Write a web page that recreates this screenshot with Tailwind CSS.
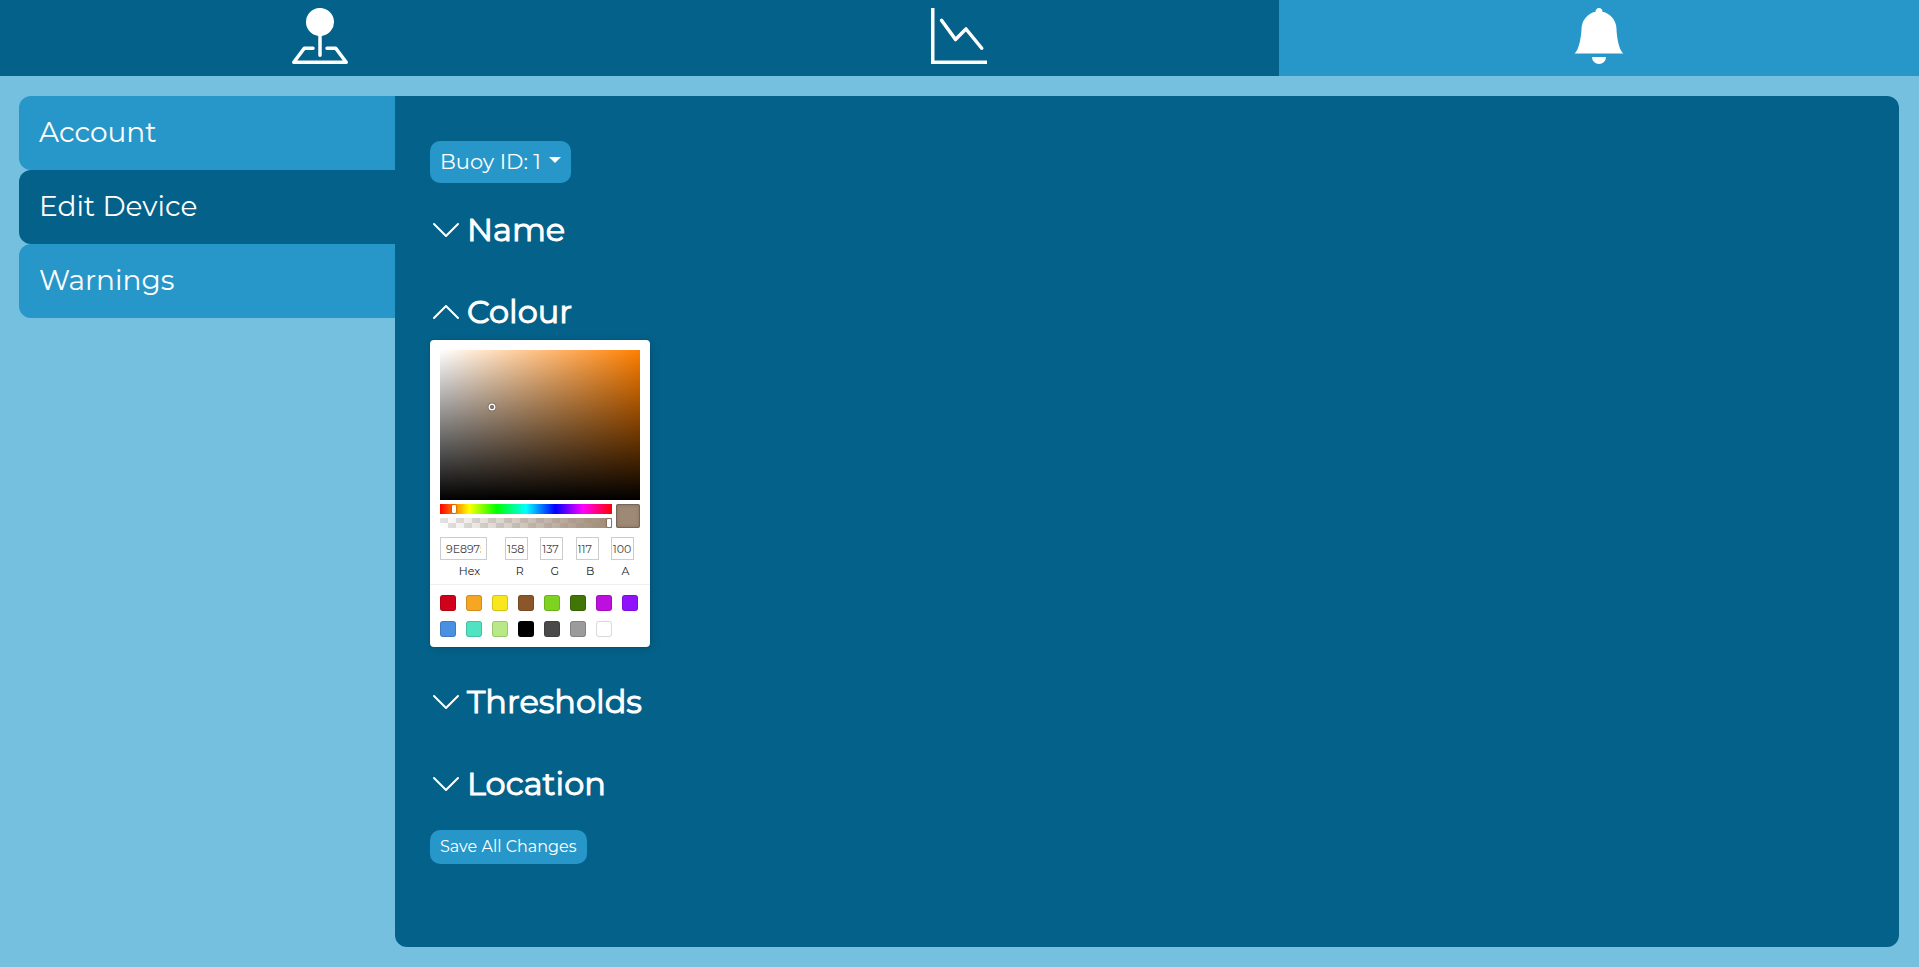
<!DOCTYPE html>
<html lang="en">
<head>
<meta charset="utf-8">
<meta name="viewport" content="width=device-width, initial-scale=1">
<title>Edit Device</title>
<script src="https://cdn.jsdelivr.net/npm/@tailwindcss/browser@4"></script>
</head>
<body class="flex min-h-screen flex-col bg-[#75bfdf] font-[Montserrat,Inter,sans-serif] text-white">
  <nav class="grid grid-cols-3 bg-[#046189]">
    <a href="#map" aria-label="Map" class="flex justify-center pt-2 pb-3">
      <svg class="size-14" viewBox="0 0 16 16" fill="currentColor"><path fill-rule="evenodd" d="M3.1 11.2a.5.5 0 0 1 .4-.2H6a.5.5 0 0 1 0 1H3.75L1.5 15h13l-2.25-3H10a.5.5 0 0 1 0-1h2.5a.5.5 0 0 1 .4.2l3 4a.5.5 0 0 1-.4.8H.5a.5.5 0 0 1-.4-.8l3-4z"/><path fill-rule="evenodd" d="M4 4a4 4 0 1 1 4.5 3.969V13.5a.5.5 0 0 1-1 0V7.97A4 4 0 0 1 4 3.999z"/></svg>
    </a>
    <a href="#graphs" aria-label="Graphs" class="flex justify-center pt-2 pb-3">
      <svg class="size-14" viewBox="0 0 16 16" fill="currentColor"><path fill-rule="evenodd" d="M0 0h1v15h15v1H0V0zm14.817 11.887a.5.5 0 0 0 .07-.704l-4.5-5.5a.5.5 0 0 0-.74-.037L7.06 8.233 3.404 3.206a.5.5 0 0 0-.808.588l4 5.5a.5.5 0 0 0 .758.06l2.609-2.61 4.15 5.073a.5.5 0 0 0 .704.07z"/></svg>
    </a>
    <a href="#warnings" aria-label="Notifications" class="flex justify-center bg-[#2797c9] pt-2 pb-3">
      <svg class="size-14" viewBox="0 0 16 16" fill="currentColor"><path d="M8 16a2 2 0 0 0 2-2H6a2 2 0 0 0 2 2zm.995-14.901a1 1 0 1 0-1.99 0A5.002 5.002 0 0 0 3 6c0 1.098-.5 6-2 7h14c-1.5-1-2-5.902-2-7 0-2.42-1.72-4.44-4.005-4.901z"/></svg>
    </a>
  </nav>

  <div class="flex grow py-5 pr-5 pl-[19px]">
    <aside class="flex w-1/5 shrink-0 flex-col text-[28px] leading-[42px]">
      <a href="#account" class="rounded-l-xl bg-[#2797c9] px-5 pt-[15px] pb-[17px]">Account</a>
      <a href="#edit" aria-current="page" class="rounded-l-xl bg-[#046189] px-5 pt-[15px] pb-[17px]">Edit Device</a>
      <a href="#warnings-list" class="rounded-l-xl bg-[#2797c9] px-5 pt-[15px] pb-[17px]">Warnings</a>
    </aside>

    <main class="flex grow flex-col items-start rounded-r-xl rounded-bl-xl bg-[#046189] px-[35px] pt-[45px] pb-10">
      <div class="relative">
        <select aria-label="Buoy" class="h-[42px] appearance-none rounded-[10px] bg-[#2797c9] pr-[30px] pl-[10px] text-[21px] field-sizing-content">
          <option>Buoy ID: 1</option>
        </select>
        <svg class="pointer-events-none absolute top-4 right-[10px] h-[6px] w-3" viewBox="0 0 12 6" fill="currentColor"><path d="M0 0h12L6 6z"/></svg>
      </div>

      <h2 class="mt-[27px] text-[32px] leading-10 [-webkit-text-stroke:1px_currentColor]">
        <button class="flex items-center gap-[5px]" aria-expanded="false">
          <svg class="size-8" viewBox="0 0 16 16" fill="currentColor"><path fill-rule="evenodd" d="M1.646 4.646a.5.5 0 0 1 .708 0L8 10.293l5.646-5.647a.5.5 0 0 1 .708.708l-6 6a.5.5 0 0 1-.708 0l-6-6a.5.5 0 0 1 0-.708z"/></svg>
          Name
        </button>
      </h2>

      <h2 class="mt-[42px] text-[32px] leading-10 [-webkit-text-stroke:1px_currentColor]">
        <button class="flex items-center gap-[5px]" aria-expanded="true">
          <svg class="size-8" viewBox="0 0 16 16" fill="currentColor"><path fill-rule="evenodd" d="M7.646 4.646a.5.5 0 0 1 .708 0l6 6a.5.5 0 0 1-.708.708L8 5.707l-5.646 5.647a.5.5 0 0 1-.708-.708l6-6z"/></svg>
          Colour
        </button>
      </h2>

      <section aria-label="Colour picker" class="mt-2 w-[220px] rounded bg-white px-[10px] pt-[10px] text-[#222] shadow-[0_0_0_1px_rgba(0,0,0,0.05),2px_2px_8px_rgba(0,0,0,0.12)]">
        <div class="relative h-[150px] bg-[linear-gradient(to_top,#000,transparent),linear-gradient(to_right,#fff,transparent),linear-gradient(#ff7f00,#ff7f00)]">
          <span class="absolute top-[38%] left-[26%] size-1 -translate-x-1/2 -translate-y-1/2 rounded-full shadow-[0_0_0_1.5px_#fff,inset_0_0_1px_1px_rgba(0,0,0,0.3),0_0_1px_2px_rgba(0,0,0,0.4)]"></span>
        </div>
        <div class="mt-1 flex gap-1">
          <div class="flex grow flex-col gap-1">
            <input type="range" aria-label="Hue" min="0" max="360" value="26" class="block h-[10px] w-full appearance-none bg-[linear-gradient(to_right,#f00_0%,#ff0_17%,#0f0_33%,#0ff_50%,#00f_67%,#f0f_83%,#f00_100%)] [&::-webkit-slider-thumb]:h-2 [&::-webkit-slider-thumb]:w-1 [&::-webkit-slider-thumb]:appearance-none [&::-webkit-slider-thumb]:rounded-[1px] [&::-webkit-slider-thumb]:bg-white [&::-webkit-slider-thumb]:shadow-[0_0_2px_rgba(0,0,0,0.6)]">
            <input type="range" aria-label="Alpha" min="0" max="168" value="167" class="block h-[10px] w-full appearance-none bg-[linear-gradient(to_right,rgba(158,137,117,0),#9e8975),repeating-conic-gradient(#fff_0_25%,#e2e2e2_0_50%)] bg-[size:auto,16px_16px] bg-left [&::-webkit-slider-thumb]:h-2 [&::-webkit-slider-thumb]:w-1 [&::-webkit-slider-thumb]:appearance-none [&::-webkit-slider-thumb]:rounded-[1px] [&::-webkit-slider-thumb]:bg-white [&::-webkit-slider-thumb]:shadow-[0_0_2px_rgba(0,0,0,0.6)]">
          </div>
          <span class="size-6 rounded-xs bg-[#9e8975] shadow-[inset_0_0_0_1px_rgba(0,0,0,0.15),inset_0_0_4px_rgba(0,0,0,0.25)]"></span>
        </div>
        <div class="mt-[9px] grid grid-cols-[59px_repeat(4,1fr)] gap-[6px] text-[11px] leading-4">
          <label class="flex flex-col text-center"><input value="9E8975" class="mb-[3px] h-[23px] w-[47px] px-[6px] text-[#444] shadow-[inset_0_0_0_1px_#ccc]">Hex</label>
          <label class="flex flex-col text-center"><input value="158" class="mb-[3px] h-[23px] w-[23px] px-[2px] text-[#444] shadow-[inset_0_0_0_1px_#ccc]">R</label>
          <label class="flex flex-col text-center"><input value="137" class="mb-[3px] h-[23px] w-[23px] px-[2px] text-[#444] shadow-[inset_0_0_0_1px_#ccc]">G</label>
          <label class="flex flex-col text-center"><input value="117" class="mb-[3px] h-[23px] w-[23px] px-[2px] text-[#444] shadow-[inset_0_0_0_1px_#ccc]">B</label>
          <label class="flex flex-col text-center"><input value="100" class="mb-[3px] h-[23px] w-[23px] px-[2px] text-[#444] shadow-[inset_0_0_0_1px_#ccc]">A</label>
        </div>
        <div class="-mx-[10px] mt-[5px] flex flex-wrap gap-[10px] border-t border-[#eee] p-[10px] pr-0">
          <button aria-label="#D0021B" class="size-4 rounded-[3px] bg-[#d0021b] shadow-[inset_0_0_0_1px_rgba(0,0,0,0.15)]"></button>
          <button aria-label="#F5A623" class="size-4 rounded-[3px] bg-[#f5a623] shadow-[inset_0_0_0_1px_rgba(0,0,0,0.15)]"></button>
          <button aria-label="#F8E71C" class="size-4 rounded-[3px] bg-[#f8e71c] shadow-[inset_0_0_0_1px_rgba(0,0,0,0.15)]"></button>
          <button aria-label="#8B572A" class="size-4 rounded-[3px] bg-[#8b572a] shadow-[inset_0_0_0_1px_rgba(0,0,0,0.15)]"></button>
          <button aria-label="#7ED321" class="size-4 rounded-[3px] bg-[#7ed321] shadow-[inset_0_0_0_1px_rgba(0,0,0,0.15)]"></button>
          <button aria-label="#417505" class="size-4 rounded-[3px] bg-[#417505] shadow-[inset_0_0_0_1px_rgba(0,0,0,0.15)]"></button>
          <button aria-label="#BD10E0" class="size-4 rounded-[3px] bg-[#bd10e0] shadow-[inset_0_0_0_1px_rgba(0,0,0,0.15)]"></button>
          <button aria-label="#9013FE" class="size-4 rounded-[3px] bg-[#9013fe] shadow-[inset_0_0_0_1px_rgba(0,0,0,0.15)]"></button>
          <button aria-label="#4A90E2" class="size-4 rounded-[3px] bg-[#4a90e2] shadow-[inset_0_0_0_1px_rgba(0,0,0,0.15)]"></button>
          <button aria-label="#50E3C2" class="size-4 rounded-[3px] bg-[#50e3c2] shadow-[inset_0_0_0_1px_rgba(0,0,0,0.15)]"></button>
          <button aria-label="#B8E986" class="size-4 rounded-[3px] bg-[#b8e986] shadow-[inset_0_0_0_1px_rgba(0,0,0,0.15)]"></button>
          <button aria-label="#000000" class="size-4 rounded-[3px] bg-black shadow-[inset_0_0_0_1px_rgba(0,0,0,0.15)]"></button>
          <button aria-label="#4A4A4A" class="size-4 rounded-[3px] bg-[#4a4a4a] shadow-[inset_0_0_0_1px_rgba(0,0,0,0.15)]"></button>
          <button aria-label="#9B9B9B" class="size-4 rounded-[3px] bg-[#9b9b9b] shadow-[inset_0_0_0_1px_rgba(0,0,0,0.15)]"></button>
          <button aria-label="#FFFFFF" class="size-4 rounded-[3px] bg-white shadow-[inset_0_0_0_1px_rgba(0,0,0,0.15)]"></button>
        </div>
      </section>

      <h2 class="mt-[35px] text-[32px] leading-10 [-webkit-text-stroke:1px_currentColor]">
        <button class="flex items-center gap-[5px]" aria-expanded="false">
          <svg class="size-8" viewBox="0 0 16 16" fill="currentColor"><path fill-rule="evenodd" d="M1.646 4.646a.5.5 0 0 1 .708 0L8 10.293l5.646-5.647a.5.5 0 0 1 .708.708l-6 6a.5.5 0 0 1-.708 0l-6-6a.5.5 0 0 1 0-.708z"/></svg>
          Thresholds
        </button>
      </h2>

      <h2 class="mt-[42px] text-[32px] leading-10 [-webkit-text-stroke:1px_currentColor]">
        <button class="flex items-center gap-[5px]" aria-expanded="false">
          <svg class="size-8" viewBox="0 0 16 16" fill="currentColor"><path fill-rule="evenodd" d="M1.646 4.646a.5.5 0 0 1 .708 0L8 10.293l5.646-5.647a.5.5 0 0 1 .708.708l-6 6a.5.5 0 0 1-.708 0l-6-6a.5.5 0 0 1 0-.708z"/></svg>
          Location
        </button>
      </h2>

      <button class="mt-[26px] rounded-[10px] bg-[#2797c9] px-[10px] py-[5px] text-base">Save All Changes</button>
    </main>
  </div>
</body>
</html>
